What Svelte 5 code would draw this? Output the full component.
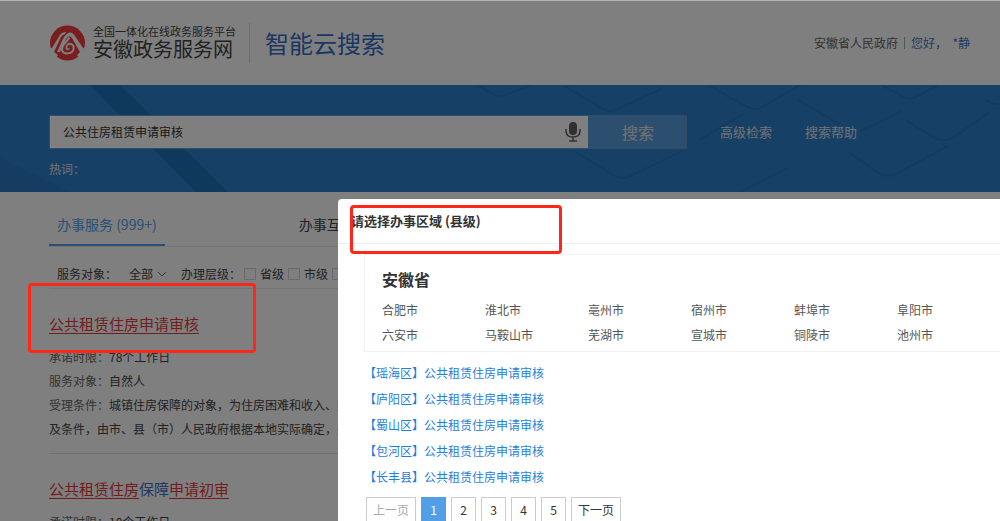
<script>
  const cities = ['合肥市', '淮北市', '亳州市', '宿州市', '蚌埠市', '阜阳市', '六安市', '马鞍山市', '芜湖市', '宣城市', '铜陵市', '池州市'];
  const districts = ['瑶海区', '庐阳区', '蜀山区', '包河区', '长丰县'];
  const pages = [1, 2, 3, 4, 5];
  const levels = ['省级', '市级', '县级'];
  let query = $state('公共住房租赁申请审核');
  let current = $state(1);
</script>

<div class="page">
  <header>
    <svg class="logo" viewBox="0 0 36 36" aria-hidden="true">
      <circle cx="18.5" cy="18" r="17.5" fill="#f23a3c" />
      <path d="M0 24L3 23L11 10Q13 7 17 7L16 9Q13 10 12 12L5 27L9 30L4 36H0Z" fill="#fff" />
      <path d="M37 24L34 23L26 11Q23 6 19 8Q16 10 14 14L8 27L11 27L17 14Q20 9 23 13L31 27L28 30L33 36H37Z" fill="#fff" />
      <path d="M20.500 12.500L14 20.500Q11 28 18 28.500Q26 28 24.500 21Q22 17.500 18.500 19.500" fill="none" stroke="#fff" stroke-width="2" />
      <path d="M18.500 19.500Q17 22 17.500 24L20.500 24" fill="none" stroke="#fff" stroke-width="1.500" />
    </svg>
    <div class="brand">
      <span class="tagline">全国一体化在线政务服务平台</span>
      <span class="site">安徽政务服务网</span>
    </div>
    <h1>智能云搜索</h1>
    <nav class="user">
      <a href="#gov">安徽省人民政府</a>
      <a class="hello" href="#me">您好，&nbsp; *静</a>
    </nav>
  </header>

  <section class="banner">
    <svg class="pattern" viewBox="0 0 1000 106" preserveAspectRatio="none" aria-hidden="true">
      <path d="M90 0h30L228 106h-32Z" fill="#1c70b8" />
      <path d="M0 72L70 106H0Z" fill="#2a7ac4" />
      <g fill="none" stroke="#2677bf" stroke-width="2">
        <path d="M477 0l18 10q5 3 10 0l26-10" />
        <path d="M563 0l40 24q7 4 14 0l46-21" />
        <path d="M575 66l40 24q8 4 16 0l50-24" />
        <path d="M708 0l40 22q7 4 14 0l38-22" />
        <path d="M882 0l22 12q6 3 12 0l22-12" />
        <path d="M798 15l42 24M860 46l42-20M906 35l30 18q8 3 16 0l37-26" />
        <path d="M848 66l32 22q8 4 16 0l52-28M985 14q8 6 15 5" />
        <path d="M700 54l44-26M740 106l48-24" />
      </g>
    </svg>
    <form class="search" onsubmit={(e) => e.preventDefault()}>
      <div class="field">
        <input type="text" aria-label="搜索" bind:value={query} />
        <button type="button" class="mic" aria-label="语音">
          <svg viewBox="0 0 16 20">
            <rect x="4" y="0" width="8" height="13" rx="4" fill="#606060" />
            <path d="M1 7v2q0 6 7 6t7-6V7M8 15v4M4 19h8" fill="none" stroke="#606060" stroke-width="1.5" />
          </svg>
        </button>
      </div>
      <button class="go">搜索</button>
      <a href="#advanced">高级检索</a>
      <a href="#help">搜索帮助</a>
    </form>
    <p class="hot">热词：</p>
  </section>

  <main>
    <nav class="tabs">
      <a class="active" href="#service">办事服务 (999+)</a>
      <a href="#interact">办事互动</a>
    </nav>
    <div class="filters">
      <span>服务对象：</span>
      <button class="drop">全部
        <svg viewBox="0 0 10 6"><path d="M1 1l4 4 4-4" fill="none" stroke="#777" /></svg>
      </button>
      <span class="level">办理层级：</span>
      {#each levels as level}
        <label><input type="checkbox" />{level}</label>
      {/each}
    </div>

    <article>
      <h2><a href="#r1">公共租赁住房申请审核</a></h2>
      <p><span>承诺时限：</span>78个工作日</p>
      <p><span>服务对象：</span>自然人</p>
      <p><span>受理条件：</span>城镇住房保障的对象，为住房困难和收入、财</p>
      <p>及条件，由市、县（市）人民政府根据本地实际确定，并</p>
      <div class="mark result-mark"></div>
    </article>
    <article>
      <h2><a href="#r2">公共租赁住房</a><a class="plain" href="#r2">保障</a><a href="#r2">申请初审</a></h2>
      <p><span>承诺时限：</span>10个工作日</p>
    </article>
  </main>
</div>

<div class="overlay">
  <div class="dialog" role="dialog" aria-labelledby="dialog-title">
    <h2 id="dialog-title">请选择办事区域 (县级)</h2>
    <div class="mark title-mark"></div>
    <div class="content">
      <section class="region">
        <h3>安徽省</h3>
        <div class="cities">
          {#each cities as city}<a href="#city">{city}</a>{/each}
        </div>
      </section>
      <ul>
        {#each districts as district}
          <li><a href="#district">【{district}】公共租赁住房申请审核</a></li>
        {/each}
      </ul>
      <nav class="pager">
        <button class="wide" disabled={current === 1} onclick={() => current--}>上一页</button>
        {#each pages as n}
          <button class:current={n === current} onclick={() => (current = n)}>{n}</button>
        {/each}
        <button class="wide" disabled={current === 5} onclick={() => current++}>下一页</button>
      </nav>
    </div>
  </div>
</div>

<style>
  :global(body) {
    overflow: hidden;
    font: 12px/24px "Noto Sans CJK SC", sans-serif;
    color: #444;
    background: #fff;
  }
  * { box-sizing: border-box; }
  h1, h2, h3, p, ul { margin: 0; padding: 0; font-weight: 400; }
  a { color: inherit; text-decoration: none; }
  button, input { font: inherit; color: inherit; }
  button { cursor: pointer; }

  .page { height: 100vh; overflow: hidden; }

  header {
    display: flex;
    align-items: center;
    height: 85px;
    padding: 0 30px 0 49px;
  }
  .logo { width: 36px; height: 36px; }
  .brand { display: flex; flex-direction: column; margin: 0 13px 0 8px; padding-bottom: 4px; }
  .tagline { font-size: 11px; line-height: 16px; }
  .site { font-size: 20px; line-height: 20px; }
  h1 {
    padding-left: 15px;
    border-left: 1px solid #ddd;
    font-size: 24px;
    line-height: 40px;
    color: #356cc6;
  }
  .user { display: flex; align-items: center; margin-left: auto; line-height: 12px; color: #666; }
  .hello { margin-left: 6px; padding-left: 6px; border-left: 1px solid #aaa; color: #3a7cc0; }

  .banner {
    display: grid;
    align-content: start;
    height: 107px;
    padding: 30px 49px 0;
    background: #2c80cc;
    color: #e4e4e4;
  }
  .banner > * { grid-column: 1; }
  .pattern {
    grid-row: 1 / 3;
    width: calc(100% + 98px);
    height: 107px;
    margin: -30px -49px -47px;
  }
  .search { grid-row: 1; display: flex; align-items: center; z-index: 1; }
  .field {
    display: flex;
    align-items: center;
    flex: 0 1 540px;
    height: 34px;
    border: 1px solid #5a9edc;
    background: #fff;
    color: #333;
  }
  .field input { flex: 1; min-width: 0; padding: 0 13px; border: 0; background: none; outline: 0; }
  .mic { display: flex; padding: 0; margin-right: 7px; border: 0; background: none; }
  .mic svg { width: 16px; height: 20px; }
  .go {
    width: 98px;
    height: 34px;
    border: 1px solid #6498cc;
    background: #5a9ede;
    font-size: 16px;
    line-height: 30px;
  }
  .search > a { margin-left: 33px; font-size: 13px; }
  .hot { grid-row: 2; z-index: 1; margin-top: 8px; }

  main { padding: 12px 49px 0; }
  .tabs { display: flex; gap: 126px; border-bottom: 1px solid #eaeaea; font-size: 14px; line-height: 40px; }
  .tabs a { padding: 0 8px; border-bottom: 2px solid transparent; }
  .tabs .active { border-color: #529fe7; color: #529fe7; }
  .filters { display: flex; align-items: center; padding: 15px 8px 2px; border-bottom: 1px solid #eaeaea; }
  .drop { display: flex; align-items: center; gap: 4px; margin: 0 14px 0 12px; padding: 0; border: 0; background: none; }
  .drop svg { width: 10px; height: 6px; }
  .level { margin-right: 3px; }
  .filters label { display: flex; align-items: center; margin-right: 4px; }
  .filters input { appearance: none; width: 12px; height: 12px; margin: 0 4px 0 0; border: 1px solid #d4d4d4; }

  article { position: relative; padding: 22px 0 12px; border-bottom: 1px solid #e4e4e4; white-space: nowrap; }
  article h2 { margin-bottom: 8px; font-size: 15px; line-height: 26px; color: #e43a3a; }
  article h2 a { text-decoration: underline; text-underline-offset: 3px; }
  article h2 .plain { color: #3a70d0; text-decoration: none; }
  article p span { color: #666; }

  .mark { position: absolute; border: 3px solid #ff2718; border-radius: 4px; pointer-events: none; }
  .result-mark { top: -6px; left: -21px; z-index: 20; width: 228px; height: 70px; }

  .overlay {
    position: fixed;
    inset: 0;
    z-index: 10;
    overflow: hidden;
    padding: 198px 0 0 338px;
    border-top: 1px solid #b0b4b4;
    background: rgba(0, 0, 0, 0.5);
  }
  .dialog { position: relative; border-radius: 4px 0 0 0; background: #fff; color: #333; }
  .dialog h2 {
    padding: 0 13px;
    border-bottom: 1px solid #eee;
    font-size: 13px;
    font-weight: 700;
    line-height: 44px;
  }
  .title-mark { top: 6px; left: 12px; width: 212px; height: 49px; }
  .content { padding: 10px 0 20px 26px; }
  .region { padding: 12px 0 4px 17px; border: 1px solid #f2f2f2; border-right: 0; }
  h3 { margin-bottom: 6px; font-size: 16px; font-weight: 700; }
  .cities { display: grid; grid-template-columns: repeat(6, 1fr); line-height: 25px; color: #555; }
  ul { margin: 8px 0 7px; list-style: none; line-height: 26px; color: #1f80dc; }
  .pager { display: flex; gap: 5px; padding-left: 2px; }
  .pager button { width: 25px; height: 26px; padding: 0; border: 1px solid #ccc; background: #fff; line-height: 24px; }
  .pager .wide { width: 50px; }
  .pager button:disabled { color: #aaa; }
  .pager .current { border-color: #529fe7; background: #529fe7; color: #fff; }
</style>
